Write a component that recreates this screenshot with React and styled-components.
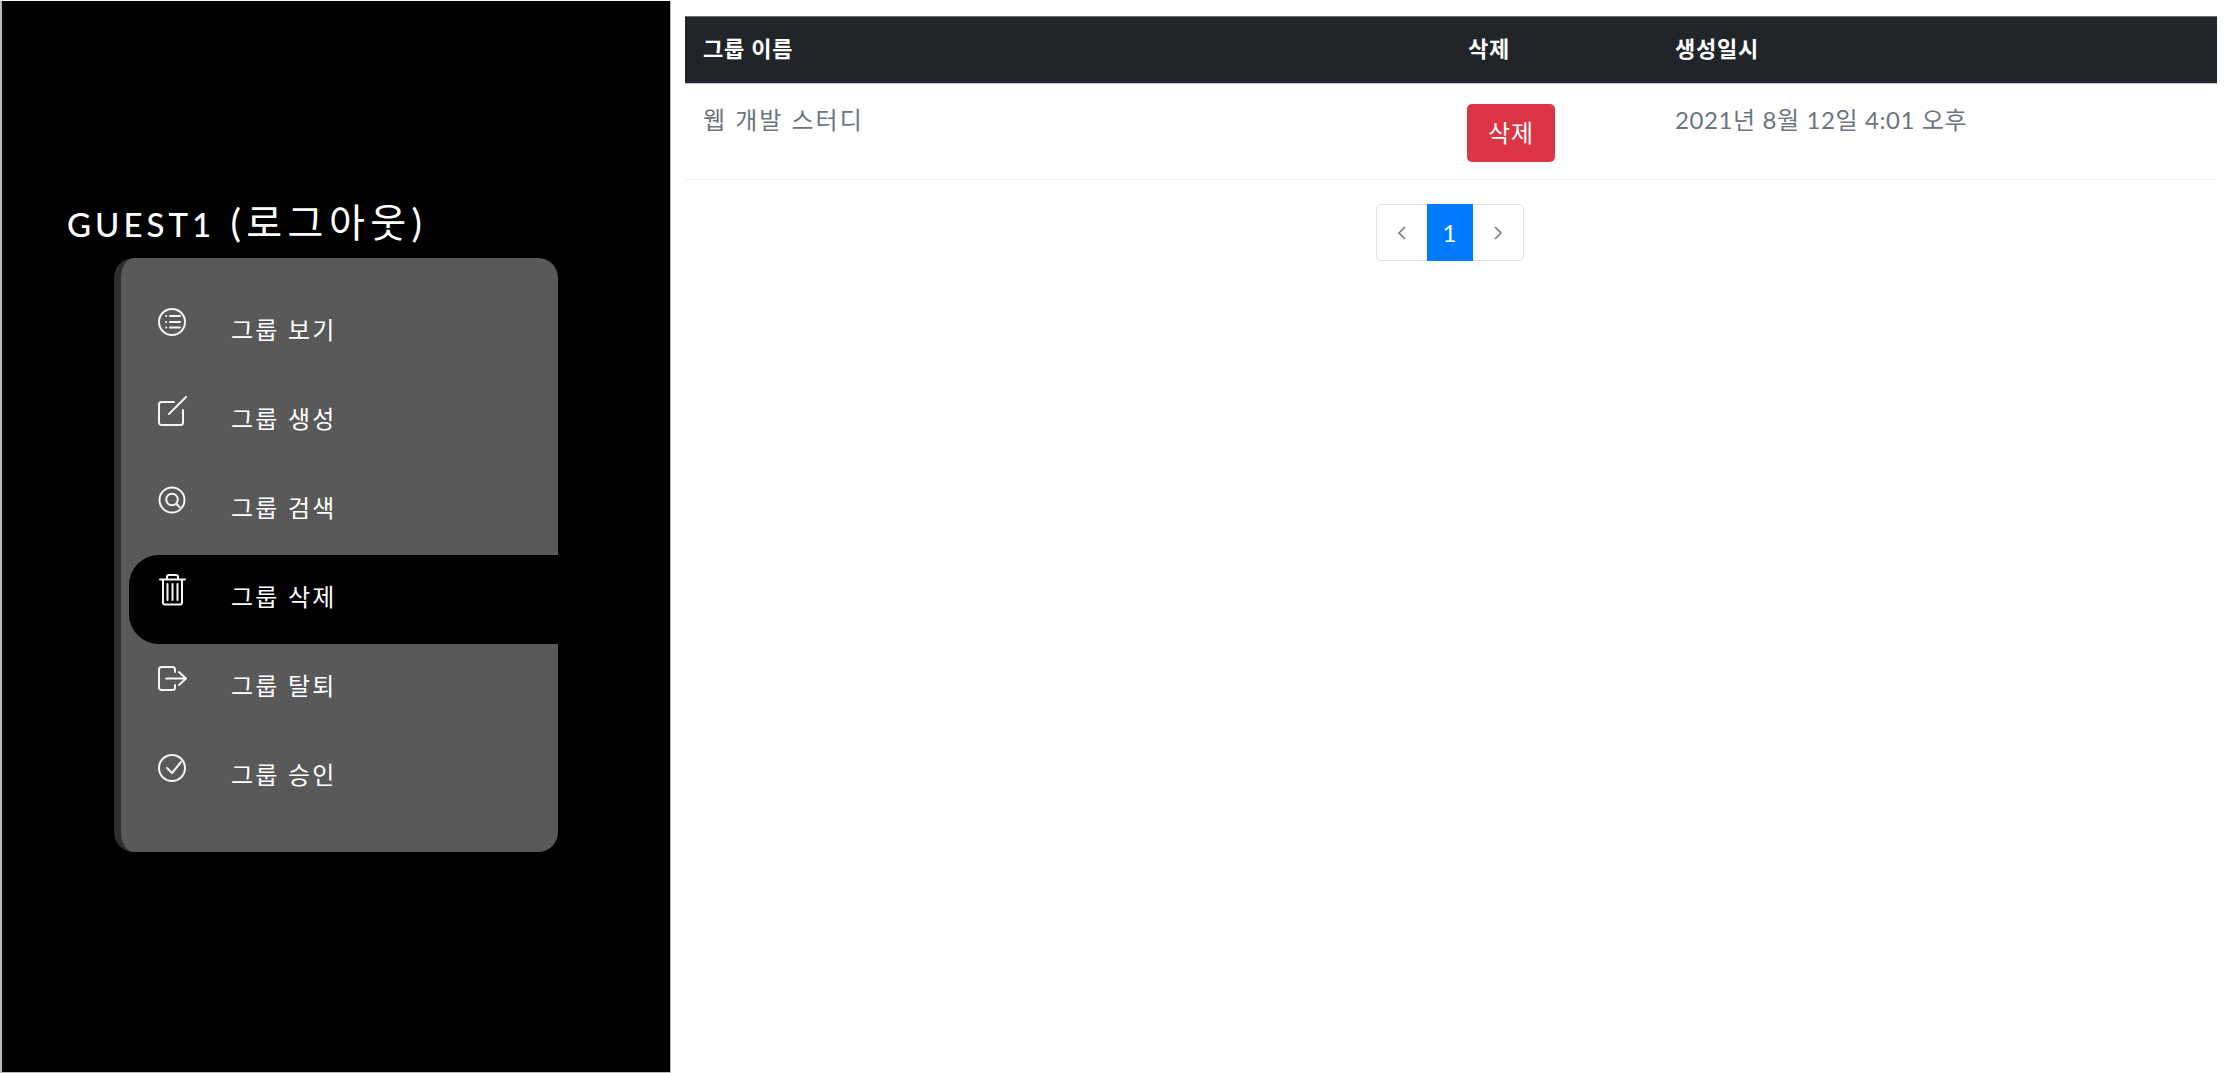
import styled, { createGlobalStyle } from 'styled-components'

const GlobalStyle = createGlobalStyle`
    html, body {
        margin: 0;
        padding: 0;
        background: #fff;
    }
    * {
        box-sizing: border-box;
    }
`;
const Page = styled.div`
    width: 2225px;
    height: 1073px;
    display: flex;
    overflow: hidden;
    font-family: "Lato", "Noto Sans CJK KR", sans-serif;
`;
const Sidebar = styled.aside`
    width: 671px;
    height: 1072px;
    margin-top: 1px;
    flex-shrink: 0;
    background: #000;
    border-left: 2px solid #b9b9b9;
    border-right: 1px solid #b9b9b9;
    border-bottom: 1px solid #b9b9b9;
    padding: 197px 0 0 65px;
`;
const UserName = styled.div`
    height: 60px;
    color: #fff;
    font-size: 39px;
    line-height: 48px;
    letter-spacing: 5.4px;
    white-space: nowrap;
`;
const LatinName = styled.span`
    font-size: 33px;
    letter-spacing: 4px;
    font-weight: 500;
`;
const Card = styled.nav`
    width: 444px;
    height: 594px;
    margin-left: 47px;
    padding: 30px 0 30px 8px;
    background: #595959;
    border-left: 7px solid #2e2e2e;
    border-radius: 20px;
`;
const MenuItem = styled.div`
    height: 89px;
    display: flex;
    padding-left: 29px;
    color: #fff;
    font-size: 24px;
    background: ${props => props.active ? "#000" : "transparent"};
    border-radius: ${props => props.active ? "30px 0 0 30px" : "0"};
`;
const IconBox = styled.span`
    width: 30px;
    height: 33px;
    margin: 19px 43px 0 0;
    flex-shrink: 0;
    svg {
        display: block;
        width: 30px;
        height: 33px;
        fill: none;
        stroke: #f4f4f4;
        stroke-width: 2;
        stroke-linecap: round;
        stroke-linejoin: round;
    }
`;
const MenuLabel = styled.span`
    padding-top: 26px;
    line-height: 32px;
    letter-spacing: 2.2px;
`;
const Content = styled.main`
    flex: 1;
    padding: 16px 8px 0 14px;
    min-width: 0;
`;
const Table = styled.div`
    width: 100%;
`;
const HeadRow = styled.div`
    height: 68px;
    display: grid;
    grid-template-columns: 765px 207px 1fr;
    align-items: center;
    background: #212529;
    border-top: 1px solid #6b6e71;
    border-bottom: 1px solid #c9ccce;
    color: #fff;
    font-size: 22px;
    font-weight: 700;
    letter-spacing: 0.8px;
`;
const HeadCell = styled.div`
    padding: 0 0 6px 18px;
`;
const BodyRow = styled.div`
    height: 96px;
    display: grid;
    grid-template-columns: 765px 207px 1fr;
    border-bottom: 1px solid #f0f1f2;
    color: #6c757d;
    font-size: 24px;
`;
const BodyCell = styled.div`
    padding: 18px 0 0 18px;
    line-height: 36px;
    letter-spacing: ${props => props.spacing || 0}px;
`;
const DeleteButton = styled.button`
    display: block;
    width: 88px;
    height: 58px;
    margin: 2px 0 0 -1px;
    padding: 0 0 4px;
    border: none;
    border-radius: 5px;
    background: #dc3545;
    color: #fff;
    font-family: inherit;
    font-size: 24px;
    letter-spacing: 1px;
`;
const PagerWrap = styled.div`
    display: flex;
    justify-content: center;
    padding: 24px 3px 0 0;
`;
const Pager = styled.div`
    display: flex;
    height: 57px;
    border: 1px solid #dee2e6;
    border-radius: 5px;
    color: #6c757d;
    font-size: 24px;
`;
const PageItem = styled.div`
    width: ${props => props.width}px;
    display: flex;
    align-items: center;
    justify-content: center;
    margin: ${props => props.active ? "-1px 0" : "0"};
    color: ${props => props.active ? "#fff" : "#6c757d"};
    background: ${props => props.active ? "#007bff" : "transparent"};
    svg {
        width: 10px;
        height: 16px;
        fill: none;
        stroke: currentColor;
        stroke-width: 1.5;
    }
`;

const icons = {
    list: (
        <svg viewBox="0 0 30 33">
            <circle cx="14" cy="15" r="13" />
            <path d="M12 9h10M12 15h10M12 20.500h10M8 9h.2M8 15h.2M8 20.500h.2" />
        </svg>
    ),
    edit: (
        <svg viewBox="0 0 30 33">
            <path d="M16 6H3.500A2.500 2.500 0 0 0 1 8.500v18A2.500 2.500 0 0 0 3.500 29h19a2.500 2.500 0 0 0 2.500-2.500V14" />
            <path d="M11 18 28 1" />
        </svg>
    ),
    search: (
        <svg viewBox="0 0 30 33">
            <circle cx="14" cy="15" r="12.500" />
            <circle cx="14" cy="14.500" r="5.800" />
            <path d="m18.300 18.800 3.200 3.200" />
        </svg>
    ),
    trash: (
        <svg viewBox="0 0 30 33">
            <path d="M2 5.500h25M9 5V3a2 2 0 0 1 2-2h7a2 2 0 0 1 2 2v2" />
            <path d="M5 6v22.500a2 2 0 0 0 2 2h15a2 2 0 0 0 2-2V6" />
            <path d="M9.500 10v16M14.500 10v16M19.500 10v16" />
        </svg>
    ),
    exit: (
        <svg viewBox="0 0 30 33">
            <path d="M17 9V6.500A2.500 2.500 0 0 0 14.500 4h-11A2.500 2.500 0 0 0 1 6.500v18A2.500 2.500 0 0 0 3.500 27h11a2.500 2.500 0 0 0 2.500-2.500V22" />
            <path d="M8 15.500h20M21 9l7 6.500-7 6.500" />
        </svg>
    ),
    check: (
        <svg viewBox="0 0 30 33">
            <circle cx="14" cy="16" r="13" />
            <path d="m9 16 5 5 9-11" />
        </svg>
    ),
};

const menu = [
    { icon: "list", label: "그룹 보기" },
    { icon: "edit", label: "그룹 생성" },
    { icon: "search", label: "그룹 검색" },
    { icon: "trash", label: "그룹 삭제", active: true },
    { icon: "exit", label: "그룹 탈퇴" },
    { icon: "check", label: "그룹 승인" },
];

const App = () => {
  return (
    <Page>
        <GlobalStyle/>
        <Sidebar>
            <UserName><LatinName>GUEST1</LatinName> (로그아웃)</UserName>
            <Card>
                {menu.map(item => (
                    <MenuItem key={item.icon} active={item.active}>
                        <IconBox>{icons[item.icon]}</IconBox>
                        <MenuLabel>{item.label}</MenuLabel>
                    </MenuItem>
                ))}
            </Card>
        </Sidebar>
        <Content>
            <Table>
                <HeadRow>
                    <HeadCell>그룹 이름</HeadCell>
                    <HeadCell>삭제</HeadCell>
                    <HeadCell>생성일시</HeadCell>
                </HeadRow>
                <BodyRow>
                    <BodyCell spacing={2}>웹 개발 스터디</BodyCell>
                    <BodyCell><DeleteButton>삭제</DeleteButton></BodyCell>
                    <BodyCell spacing={0.6}>2021년 8월 12일 4:01 오후</BodyCell>
                </BodyRow>
            </Table>
            <PagerWrap>
                <Pager>
                    <PageItem width={50}><svg viewBox="0 0 10 16"><path d="M8 2 2 8l6 6"/></svg></PageItem>
                    <PageItem width={46} active>1</PageItem>
                    <PageItem width={50}><svg viewBox="0 0 10 16"><path d="m2 2 6 6-6 6"/></svg></PageItem>
                </Pager>
            </PagerWrap>
        </Content>
    </Page>
  )
}

export default App
